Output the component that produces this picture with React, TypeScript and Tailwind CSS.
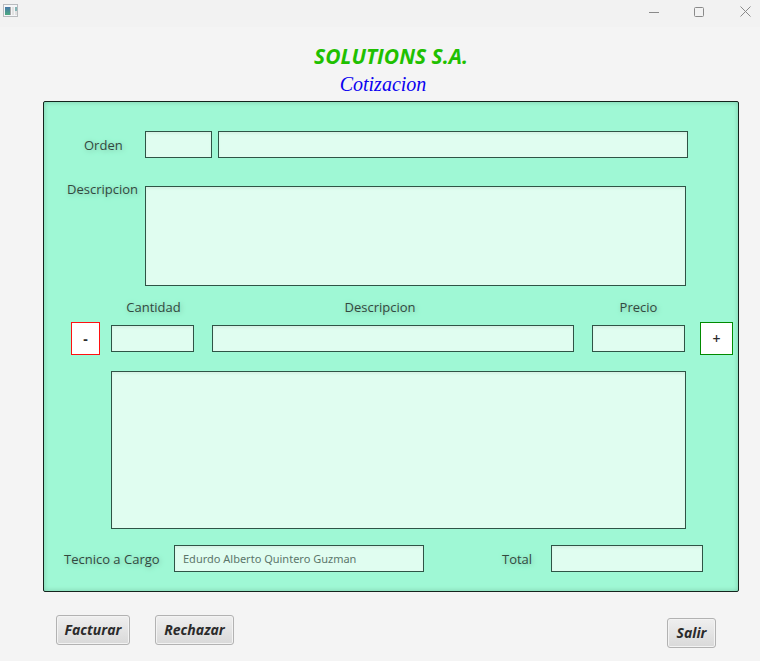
import React from "react";

const field =
  "block border border-[#2f5446] bg-[#e0fdf0] px-2 font-['Noto_Sans',sans-serif] text-[11px] text-[#5c766b] outline-none shadow-[inset_0_2px_2px_#d6f3e5]";
const label =
  "whitespace-nowrap text-[13px] leading-5 text-[#32493f] [text-shadow:1px_1px_5px_#7dc0a4]";
const action =
  "h-[30px] rounded-[3px] border border-[#b2b2b2] bg-linear-to-b from-[#efefef] to-[#d9d9d9] text-center text-[14px] leading-7 font-bold italic text-[#2b2b2b] shadow-[inset_0_0_0_1px_#f3f3f3]";

function TitleBar() {
  return (
    <header className="flex h-[27px] items-start justify-between bg-[#f2f2f2]">
      <svg className="mt-1 ml-[3px]" width="16" height="14" viewBox="0 0 16 14" aria-hidden="true">
        <defs>
          <linearGradient id="pane" x1="0" y1="0" x2="0" y2="1">
            <stop offset="0" stopColor="#4677a8" />
            <stop offset="1" stopColor="#4cab80" />
          </linearGradient>
        </defs>
        <rect x="0.5" y="0.5" width="14" height="12" fill="#f5f6f8" stroke="#b8bbbe" />
        <rect x="2" y="3" width="5" height="8" fill="url(#pane)" />
        <rect x="7" y="3" width="1" height="8" fill="#a8a8a8" />
        <rect x="9" y="3" width="2" height="8" fill="#e1e1e1" />
        <rect x="12" y="3" width="2" height="4" fill="#85b5b5" />
        <rect x="12" y="7" width="2" height="4" fill="#e1e1e1" />
      </svg>
      <div className="flex h-[22px]">
        <button aria-label="Minimizar" className="flex w-[45px] items-center justify-center">
          <svg width="11" height="11" viewBox="0 0 11 11" stroke="#8a8a8a" fill="none">
            <path d="M0 6.5H10" />
          </svg>
        </button>
        <button aria-label="Maximizar" className="flex w-[45px] items-center justify-center">
          <svg width="11" height="11" viewBox="0 0 11 11" stroke="#8a8a8a" fill="none">
            <rect x="0.5" y="1.5" width="9" height="9" rx="1" />
          </svg>
        </button>
        <button aria-label="Cerrar" className="flex w-[38px] items-center justify-center pl-2">
          <svg width="11" height="11" viewBox="0 0 11 11" stroke="#8a8a8a" fill="none">
            <path d="M0.5 0.5L10.5 10.5M10.5 0.5L0.5 10.5" />
          </svg>
        </button>
      </div>
    </header>
  );
}

export default function App() {
  return (
    <div className="min-h-screen bg-[#f4f4f4] font-['Open_Sans','Noto_Sans',sans-serif]">
      <TitleBar />
      <main className="pr-[21px] pl-[43px]">
        <div className="pt-[14px] text-center">
          <h1 className="text-[21px] leading-[30px] font-bold text-[#1fc000] italic">SOLUTIONS S.A.</h1>
          <h2 className="mr-4 font-['Liberation_Serif',serif] text-[20px] leading-[26px] text-[#0a00f0] italic">
            Cotizacion
          </h2>
        </div>

        <form
          onSubmit={(e) => e.preventDefault()}
          className="mt-1 rounded-[2px] border border-[#14241d] bg-[#9ff8d5] pt-[29px] pb-[19px] shadow-[inset_0_0_5px_#7dc9aa]"
        >
          <div className="flex items-center pr-[50px]">
            <label htmlFor="orden" className={label + " w-[101px] pl-10"}>Orden</label>
            <input id="orden" className={field + " mr-[6px] h-[27px] w-[67px]"} />
            <input aria-label="Detalle de la orden" className={field + " h-[27px] min-w-0 flex-1"} />
          </div>

          <div className="mt-[21px] flex items-start pr-[52px]">
            <label htmlFor="descripcion" className={label + " w-[101px] pl-[23px]"}>Descripcion</label>
            <textarea id="descripcion" className={field + " mt-[7px] h-[100px] min-w-0 flex-1 resize-none"} />
          </div>

          <div className="mt-[11px] flex items-end pr-[5px] pl-[27px]">
            <button type="button" aria-label="Quitar" className="mr-[11px] h-[33px] w-[29px] border border-[#ff1010] bg-white text-[14px] font-bold text-[#2b2b2b]">
              -
            </button>
            <div className="flex min-w-0 flex-1 gap-[18px] pb-[3px]">
              <div className="flex w-[83px] flex-col gap-2 text-center">
                <label htmlFor="cantidad" className={label + " pl-[2px]"}>Cantidad</label>
                <input id="cantidad" className={field + " h-[27px] w-full"} />
              </div>
              <div className="flex min-w-0 flex-1 flex-col gap-2 text-center">
                <label htmlFor="item" className={label + " pr-[26px]"}>Descripcion</label>
                <input id="item" className={field + " h-[27px] w-full"} />
              </div>
              <div className="flex w-[93px] flex-col gap-2 text-center">
                <label htmlFor="precio" className={label}>Precio</label>
                <input id="precio" className={field + " h-[27px] w-full"} />
              </div>
            </div>
            <button type="button" aria-label="Agregar" className="ml-[15px] h-[33px] w-[33px] border border-[#008a00] bg-white text-[14px] font-semibold text-[#2b2b2b]">
              +
            </button>
          </div>

          <div className="mt-4 pr-[52px] pl-[67px]">
            <textarea aria-label="Detalle" className={field + " h-[158px] w-full resize-none"} />
          </div>

          <div className="mt-4 flex items-center justify-between pr-[35px] pl-5">
            <div className="flex items-center">
              <label htmlFor="tecnico" className={label + " w-[110px]"}>Tecnico a Cargo</label>
              <input id="tecnico" defaultValue="Edurdo Alberto Quintero Guzman" className={field + " h-[27px] w-[250px]"} />
            </div>
            <div className="flex items-center">
              <label htmlFor="total" className={label + " w-[49px]"}>Total</label>
              <input id="total" className={field + " h-[27px] w-[152px]"} />
            </div>
          </div>
        </form>

        <div className="mt-[23px] flex pr-[23px] pl-[13px]">
          <button className={action + " w-[74px]"}>Facturar</button>
          <button className={action + " ml-[25px] w-[79px]"}>Rechazar</button>
          <button className={action + " mt-[3px] ml-auto w-[49px]"}>Salir</button>
        </div>
      </main>
    </div>
  );
}
